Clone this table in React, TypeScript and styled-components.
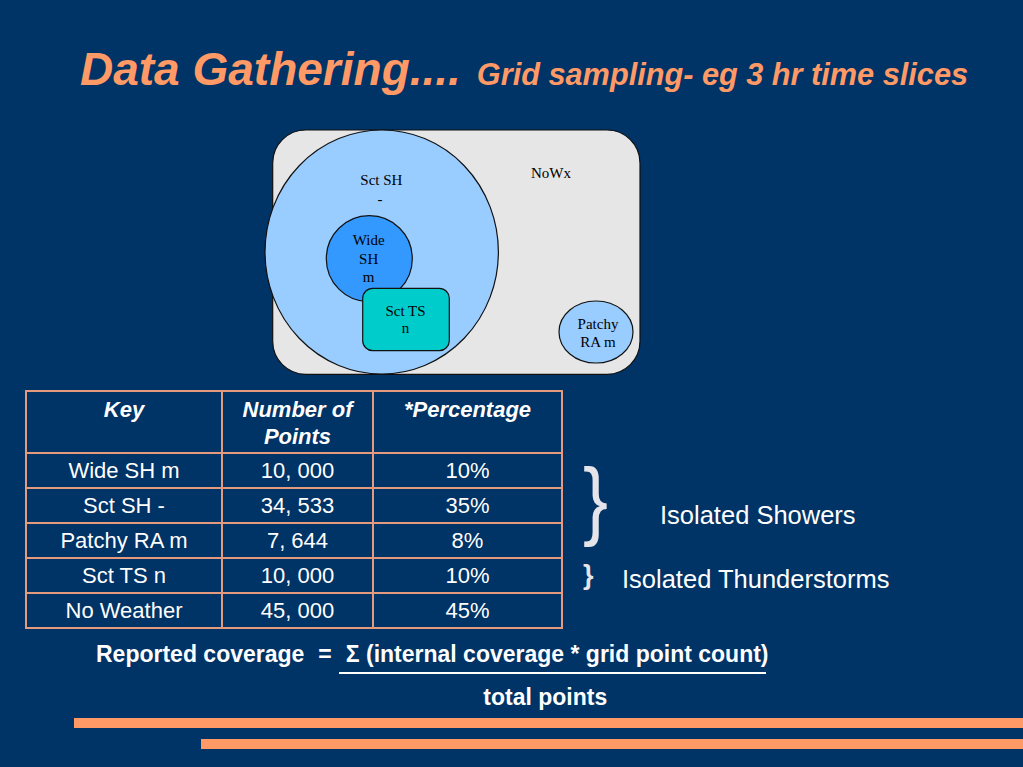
import React from "react";
import styled, { createGlobalStyle } from "styled-components";

const GlobalStyle = createGlobalStyle`
  html, body { margin: 0; padding: 0; background: #003366; }
  body { font-family: "Liberation Sans", Arial, sans-serif; }
`;

const Slide = styled.div`
  width: 1023px;
  height: 767px;
  background: #003366;
  display: flex;
  flex-direction: column;
  overflow: hidden;
  font-family: "Liberation Sans", Arial, sans-serif;
  color: #ffffff;
`;

const TitleRow = styled.div`
  display: flex;
  align-items: baseline;
  margin: 43px 0 0 80px;
  color: #ff9966;
  font-weight: bold;
  font-style: italic;
  white-space: nowrap;
`;

const MainTitle = styled.span`
  font-size: 46px;
  line-height: 52px;
`;

const SubTitle = styled.span`
  font-size: 30.7px;
  margin-left: 16px;
`;

const DiagramWrap = styled.div`
  margin: 32px 0 0 262px;
  width: 382px;
  height: 251px;
`;

const MiddleRow = styled.div`
  display: flex;
  align-items: flex-start;
  margin: 12px 0 0 25px;
`;

const DataTable = styled.table`
  border-collapse: collapse;
  table-layout: fixed;
  width: 538px;
  font-size: 22px;
`;

const Cell = styled.td<{ $head?: boolean }>`
  border: 2px solid #e59a7e;
  text-align: center;
  padding: 0;
  color: #ffffff;
  font-weight: ${(p) => (p.$head ? "bold" : "normal")};
  font-style: ${(p) => (p.$head ? "italic" : "normal")};
  vertical-align: ${(p) => (p.$head ? "top" : "middle")};
  line-height: ${(p) => (p.$head ? "27px" : "26px")};
  padding-top: ${(p) => (p.$head ? "4px" : "0")};
`;

const Row = styled.tr<{ $h: number }>`
  height: ${(p) => p.$h}px;
`;

const Legend = styled.div`
  display: flex;
  flex-direction: column;
  margin-left: 20px;
  padding-top: 72px;
`;

const LegendItem = styled.div<{ $gap: number; $top: number }>`
  display: flex;
  align-items: flex-start;
  gap: ${(p) => p.$gap}px;
  margin-top: ${(p) => p.$top}px;
`;

const BigBrace = styled.span`
  display: block;
  width: 22px;
  height: 86px;
  font-size: 88px;
  line-height: 86px;
  color: #e4e4ea;
  transform: scaleX(0.85);
  transform-origin: left top;
  margin-top: -6px;
`;

const SmallBrace = styled.span`
  display: block;
  font-size: 27px;
  font-weight: bold;
  line-height: 30px;
  color: #e4e4ea;
  width: 9px;
`;

const LegendText = styled.span<{ $top: number }>`
  font-size: 25.5px;
  line-height: 28px;
  color: #ffffff;
  margin-top: ${(p) => p.$top}px;
  white-space: nowrap;
`;

const Formula = styled.div`
  display: flex;
  align-items: flex-start;
  margin: 12px 0 0 96px;
  font-weight: bold;
  font-size: 23px;
  line-height: 26px;
  white-space: nowrap;
`;

const Equals = styled.span`
  margin: 0 7px 0 14px;
`;

const Fraction = styled.div`
  display: flex;
  flex-direction: column;
  align-items: flex-start;
`;

const Numerator = styled.span`
  padding-left: 7px;
`;

const FractionRule = styled.div`
  width: 427px;
  height: 2px;
  background: #ffffff;
  margin-top: 5px;
`;

const Denominator = styled.span`
  width: 413px;
  text-align: center;
  margin-top: 10px;
`;

const Bars = styled.div`
  display: flex;
  flex-direction: column;
  gap: 11px;
  margin-top: 8px;
`;

const Bar = styled.div<{ $left: number }>`
  height: 10px;
  margin-left: ${(p) => p.$left}px;
  background: #ff9966;
`;

const VennText = styled.text`
  font-family: "Liberation Serif", "Times New Roman", serif;
  font-size: 15px;
  fill: #000000;
  text-anchor: middle;
`;

function VennDiagram() {
  return (
    <svg width="382" height="251" viewBox="0 0 382 251">
      <rect x="10.7" y="3" width="367.3" height="244.3" rx="33" fill="#e6e6e6" stroke="#111" strokeWidth="1.2" />
      <ellipse cx="119.7" cy="125" rx="116.7" ry="122" fill="#99ccff" stroke="#111" strokeWidth="1.2" />
      <circle cx="107.3" cy="131.7" r="43" fill="#3399ff" stroke="#111" strokeWidth="1.2" />
      <rect x="100.7" y="161.3" width="86.6" height="62.4" rx="10" fill="#00cccc" stroke="#111" strokeWidth="1.2" />
      <ellipse cx="334" cy="205" rx="37" ry="31" fill="#99ccff" stroke="#111" strokeWidth="1.2" />
      <VennText x="119.4" y="58">Sct SH</VennText>
      <VennText x="118" y="76.7">-</VennText>
      <VennText x="289" y="51">NoWx</VennText>
      <VennText x="106.7" y="118">Wide</VennText>
      <VennText x="106.7" y="137.3">SH</VennText>
      <VennText x="106.7" y="154.7">m</VennText>
      <VennText x="143.5" y="188.7">Sct TS</VennText>
      <VennText x="143.5" y="206">n</VennText>
      <VennText x="336" y="202">Patchy</VennText>
      <VennText x="336" y="219.7">RA m</VennText>
    </svg>
  );
}

const rows: [string, string, string][] = [
  ["Wide SH m", "10, 000", "10%"],
  ["Sct SH -", "34, 533", "35%"],
  ["Patchy RA m", "7, 644", "8%"],
  ["Sct TS n", "10, 000", "10%"],
  ["No Weather", "45, 000", "45%"],
];

export default function App() {
  return (
    <Slide>
      <GlobalStyle />
      <TitleRow>
        <MainTitle>Data Gathering....</MainTitle>
        <SubTitle>Grid sampling- eg 3 hr time slices</SubTitle>
      </TitleRow>
      <DiagramWrap>
        <VennDiagram />
      </DiagramWrap>
      <MiddleRow>
        <DataTable>
          <colgroup>
            <col style={{ width: 196 }} />
            <col style={{ width: 151 }} />
            <col style={{ width: 189 }} />
          </colgroup>
          <tbody>
            <Row $h={62}>
              <Cell $head>Key</Cell>
              <Cell $head>
                Number of
                <br />
                Points
              </Cell>
              <Cell $head>*Percentage</Cell>
            </Row>
            {rows.map((r) => (
              <Row $h={35} key={r[0]}>
                <Cell>{r[0]}</Cell>
                <Cell>{r[1]}</Cell>
                <Cell>{r[2]}</Cell>
              </Row>
            ))}
          </tbody>
        </DataTable>
        <Legend>
          <LegendItem $gap={55} $top={0}>
            <BigBrace>{"}"}</BigBrace>
            <LegendText $top={39}>Isolated Showers</LegendText>
          </LegendItem>
          <LegendItem $gap={30} $top={18}>
            <SmallBrace>{"}"}</SmallBrace>
            <LegendText $top={5}>Isolated Thunderstorms</LegendText>
          </LegendItem>
        </Legend>
      </MiddleRow>
      <Formula>
        <span>Reported coverage</span>
        <Equals>=</Equals>
        <Fraction>
          <Numerator>Σ (internal coverage * grid point count)</Numerator>
          <FractionRule />
          <Denominator>total points</Denominator>
        </Fraction>
      </Formula>
      <Bars>
        <Bar $left={74} />
        <Bar $left={201} />
      </Bars>
    </Slide>
  );
}
